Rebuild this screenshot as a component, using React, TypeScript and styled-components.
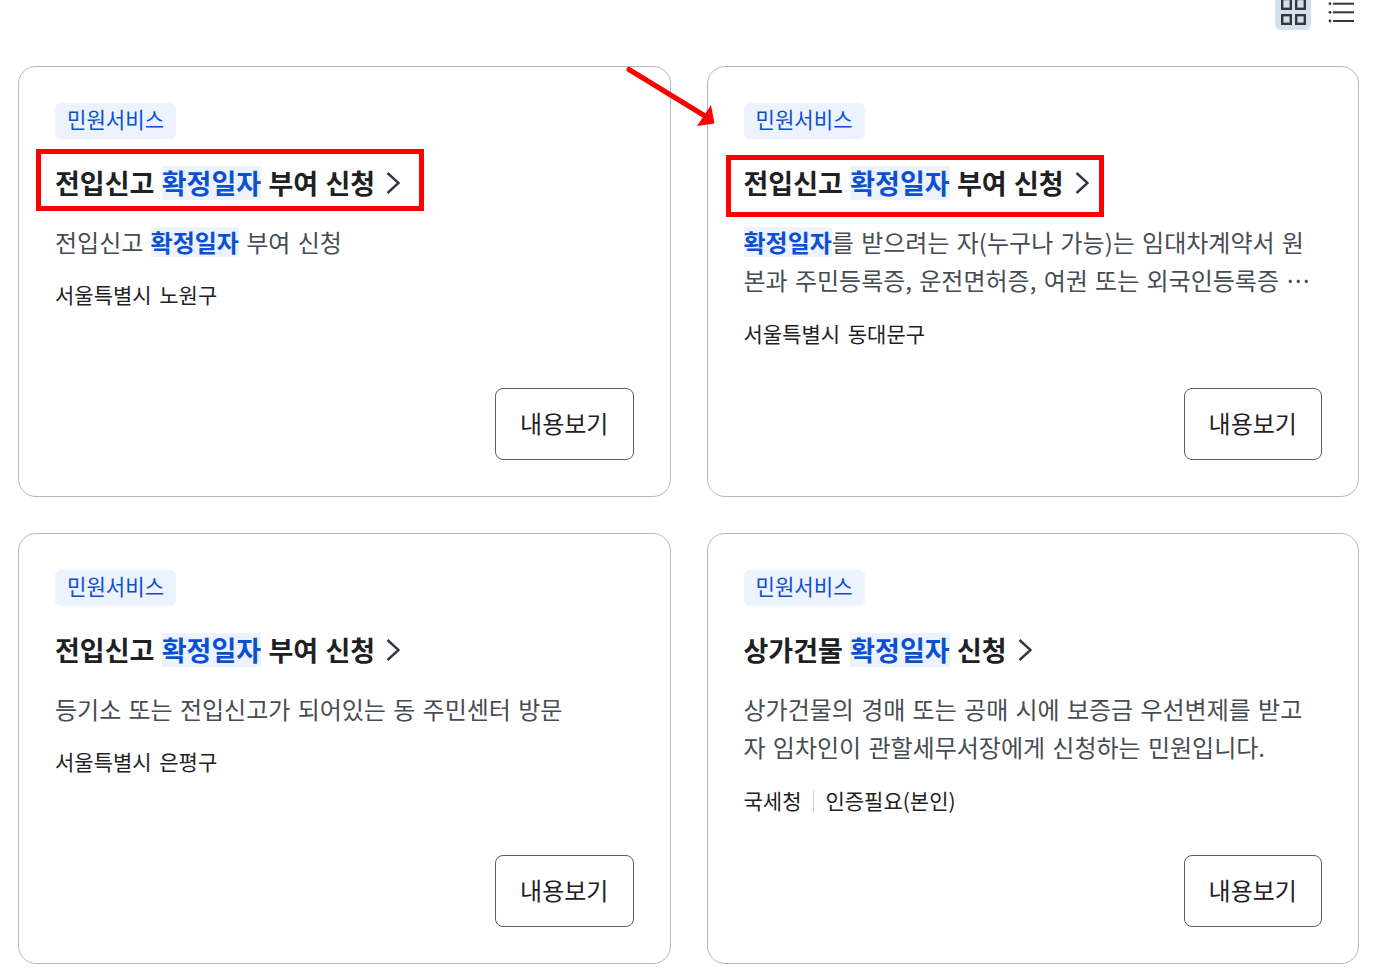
import React from 'react';
import styled, { createGlobalStyle } from 'styled-components';

type CardData = {
  title: React.ReactNode;
  desc: React.ReactNode;
  meta: string[];
  marked?: 'left' | 'right';
};

const GlobalStyle = createGlobalStyle`
  html, body {
    margin: 0;
    padding: 0;
    background: #fff;
    overflow: hidden;
    font-family: "Noto Sans CJK KR", "Noto Sans", sans-serif;
    color: #1e2124;
  }
`;

const Page = styled.main`
  position: relative;
  width: 1389px;
  height: 970px;
  padding: 0 30px 0 18px;
  box-sizing: border-box;
  overflow: hidden;
`;

const Toolbar = styled.div`
  height: 30px;
  margin-bottom: 36px;
  display: flex;
  justify-content: flex-end;
  gap: 12px;
`;

const ViewButton = styled.button<{ $active?: boolean }>`
  width: 36px;
  height: 30px;
  padding: 0;
  border: 0;
  border-radius: 0 0 6px 6px;
  background: ${(p) => (p.$active ? '#d6e0eb' : 'transparent')};
  display: flex;
  align-items: flex-start;
  justify-content: center;
`;

const Grid = styled.div`
  display: grid;
  grid-template-columns: 1fr 1fr;
  grid-auto-rows: 431px;
  gap: 36px;
`;

const Card = styled.article`
  position: relative;
  box-sizing: border-box;
  border: 1px solid #b1b8be;
  border-radius: 18px;
  padding: 36px;
  display: flex;
  flex-direction: column;
  align-items: flex-start;
`;

const Tag = styled.span`
  height: 36px;
  padding: 0 12px;
  border-radius: 6px;
  background: #ecf2fe;
  color: #0b50d0;
  font-size: 21.1px;
  line-height: 33px;
`;

const Title = styled.h3`
  margin: 0;
  margin-top: 21px;
  display: flex;
  align-items: center;
  gap: 11px;
  font-size: 27px;
  line-height: 45px;
  font-weight: 700;
  white-space: pre;
  word-spacing: 1.2px;
`;

const Hit = styled.em`
  display: inline-block;
  font-style: normal;
  line-height: 1.25;
  color: #0b50d0;
  background: #ecf2fe;
`;

const StrongHit = styled(Hit)`
  font-weight: 700;
`;

const Desc = styled.p`
  margin: 0;
  margin-top: 18px;
  font-size: 24px;
  line-height: 38.4px;
  color: #464c53;
  width: 578px;
  word-spacing: 1.9px;
`;

const Clamp = styled.span`
  display: -webkit-box;
  -webkit-line-clamp: 2;
  -webkit-box-orient: vertical;
  overflow: hidden;
`;

const Meta = styled.div`
  margin-top: 17px;
  display: flex;
  align-items: center;
  font-size: 21px;
  line-height: 32px;
  color: #1e2124;
  word-spacing: 3px;
`;

const MetaItem = styled.span`
  & + & {
    margin-left: 12px;
    padding-left: 12px;
    position: relative;
  }
  & + &::before {
    content: '';
    position: absolute;
    left: 0;
    top: 6px;
    height: 22px;
    width: 1px;
    background: #cdd1d5;
  }
`;

const MoreButton = styled.button`
  position: absolute;
  right: 36px;
  bottom: 36px;
  width: 138.5px;
  height: 72px;
  padding: 0 0 3px;
  box-sizing: border-box;
  background: #fff;
  border: 1px solid #58616a;
  border-radius: 8px;
  font-family: inherit;
  font-size: 24px;
  color: #1e2124;
`;

const RedBox = styled.div<{ $side: 'left' | 'right' }>`
  position: absolute;
  top: ${(p) => (p.$side === 'left' ? 81.5 : 87.5)}px;
  left: ${(p) => (p.$side === 'left' ? 16.5 : 18)}px;
  width: ${(p) => (p.$side === 'left' ? 388 : 378)}px;
  height: 62px;
  box-sizing: border-box;
  border: 5px solid #ff0000;
`;

const Arrow = styled.svg`
  position: absolute;
  left: 620px;
  top: 60px;
  overflow: visible;
`;

const GridIcon = () => (
  <svg width="28" height="26" viewBox="0 0 28 26">
    <g fill="none" stroke="#33363d" strokeWidth="2.4">
      <rect x="3.2" y="-1" width="8.6" height="9.8" />
      <rect x="17.2" y="-1" width="8.6" height="9.8" />
      <rect x="3.2" y="15.2" width="8.6" height="8.6" />
      <rect x="17.2" y="15.2" width="8.6" height="8.6" />
    </g>
  </svg>
);

const ListIcon = () => (
  <svg width="28" height="26" viewBox="0 0 28 26">
    <g fill="#33363d">
      <circle cx="3" cy="3.7" r="1.4" />
      <circle cx="3" cy="12.3" r="1.4" />
      <circle cx="3" cy="21" r="1.4" />
      <rect x="6" y="2.7" width="21" height="2" />
      <rect x="6" y="11.3" width="21" height="2" />
      <rect x="6" y="20" width="21" height="2" />
    </g>
  </svg>
);

const Chevron = () => (
  <svg width="14" height="24" viewBox="0 0 14 24">
    <path d="M1.5 2 L12.5 12 L1.5 22" fill="none" stroke="#33363d" strokeWidth="2.4" />
  </svg>
);

const cards: CardData[] = [
  {
    title: <>전입신고 <Hit>확정일자</Hit> 부여 신청</>,
    desc: <>전입신고 <StrongHit>확정일자</StrongHit> 부여 신청</>,
    meta: ['서울특별시 노원구'],
    marked: 'left',
  },
  {
    title: <>전입신고 <Hit>확정일자</Hit> 부여 신청</>,
    desc: (
      <>
        <StrongHit>확정일자</StrongHit>를 받으려는 자(누구나 가능)는 임대차계약서 원본과 주민등록증, 운전면허증, 여권 또는 외국인등록증 사본을 지참하여 방문
      </>
    ),
    meta: ['서울특별시 동대문구'],
    marked: 'right',
  },
  {
    title: <>전입신고 <Hit>확정일자</Hit> 부여 신청</>,
    desc: <>등기소 또는 전입신고가 되어있는 동 주민센터 방문</>,
    meta: ['서울특별시 은평구'],
  },
  {
    title: <>상가건물 <Hit>확정일자</Hit> 신청</>,
    desc: <>상가건물의 경매 또는 공매 시에 보증금 우선변제를 받고자 임차인이 관할세무서장에게 신청하는 민원입니다.</>,
    meta: ['국세청', '인증필요(본인)'],
  },
];

export default function App() {
  return (
    <Page>
      <GlobalStyle />
      <Toolbar>
        <ViewButton $active><GridIcon /></ViewButton>
        <ViewButton><ListIcon /></ViewButton>
      </Toolbar>
      <Grid>
        {cards.map((card, i) => (
          <Card key={i}>
            <Tag>민원서비스</Tag>
            <Title>
              <span>{card.title}</span>
              <Chevron />
            </Title>
            <Desc><Clamp>{card.desc}</Clamp></Desc>
            <Meta>
              {card.meta.map((m) => (
                <MetaItem key={m}>{m}</MetaItem>
              ))}
            </Meta>
            <MoreButton>내용보기</MoreButton>
            {card.marked && <RedBox $side={card.marked} />}
          </Card>
        ))}
      </Grid>
      <Arrow width="100" height="70" viewBox="0 0 100 70">
        <path d="M9 9.5 L85 56" stroke="#ff0000" strokeWidth="5" strokeLinecap="round" />
        <path d="M91 45 L94.5 63.5 L77 66 Z" fill="#ff0000" />
      </Arrow>
    </Page>
  );
}
